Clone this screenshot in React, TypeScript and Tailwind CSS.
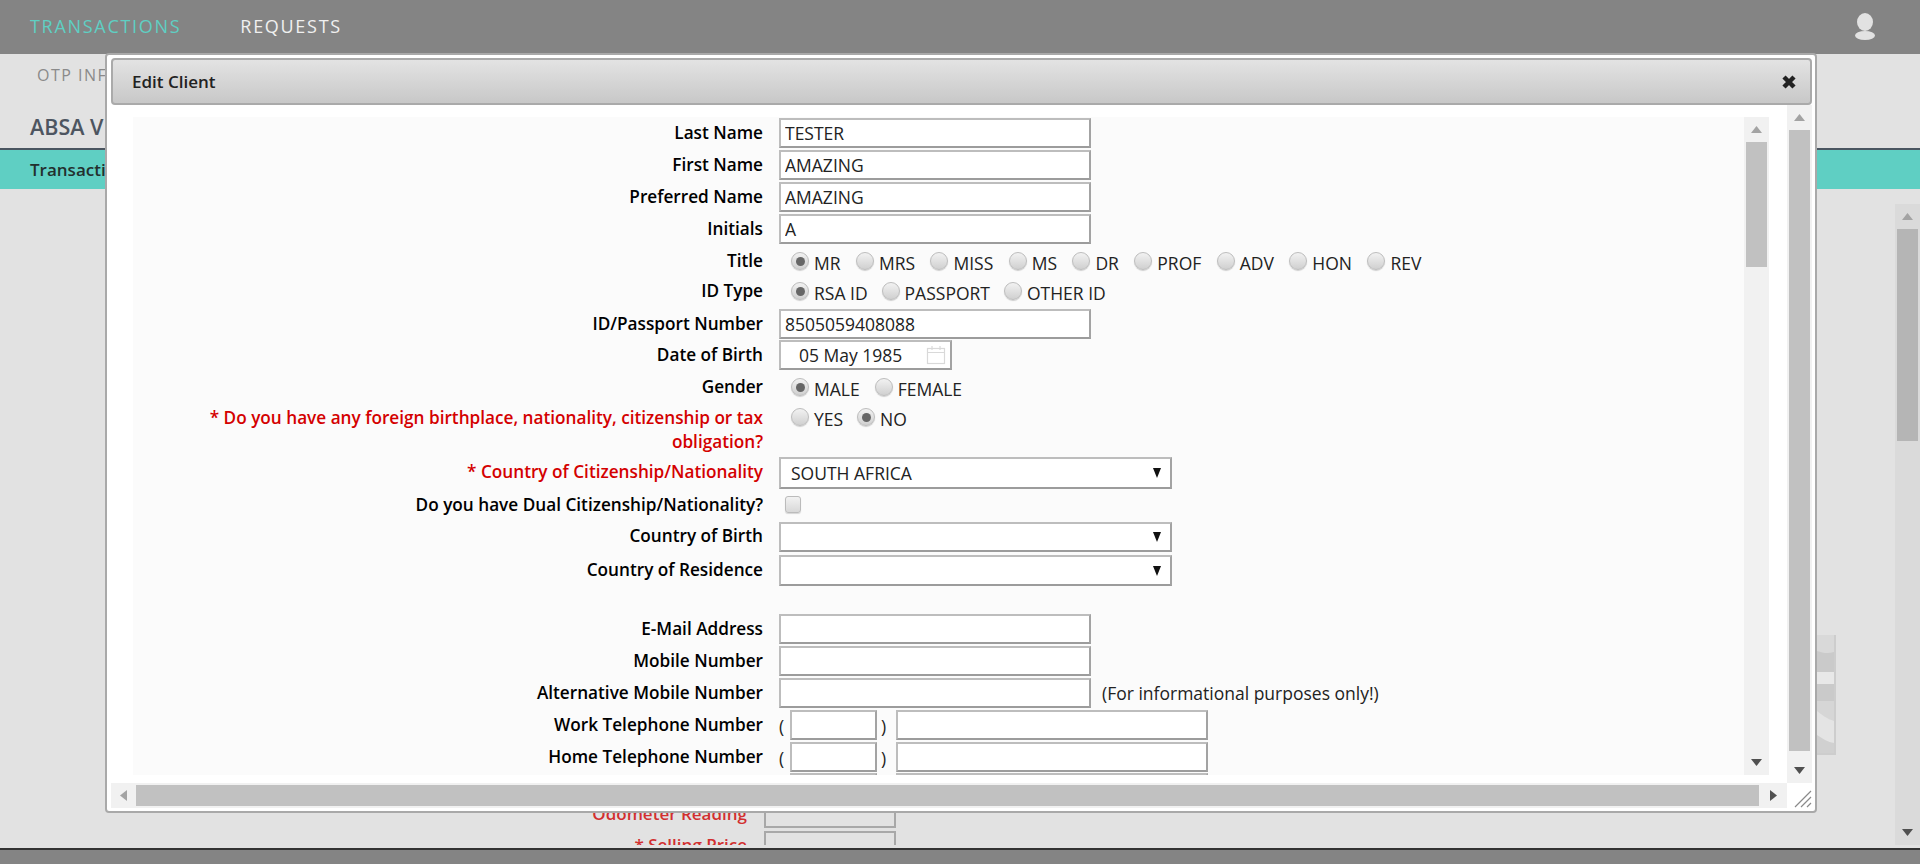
import type { ReactNode } from "react"

const inputClass =
  "h-full border-2 border-t-[#bdbdbd] border-l-[#bdbdbd] border-r-[#a3a3a3] border-b-[#9c9c9c] bg-white px-[4px] text-[17.5px] text-[#222] outline-none"

function Arrow({ dir, color }: { dir: "up" | "down" | "left" | "right"; color: string }) {
  if (dir === "up" || dir === "down") {
    return (
      <svg width="11" height="7" viewBox="0 0 11 7">
        <path d={dir === "up" ? "M5.5 0 11 7H0z" : "M0 0h11L5.5 7z"} fill={color} />
      </svg>
    )
  }
  return (
    <svg width="7" height="11" viewBox="0 0 7 11">
      <path d={dir === "left" ? "M7 0v11L0 5.5z" : "M0 0l7 5.5L0 11z"} fill={color} />
    </svg>
  )
}

function VScroll({ thumb, track = "bg-[#f1f1f1]", thumbColor = "bg-[#c1c1c1]" }: { thumb: string; track?: string; thumbColor?: string }) {
  return (
    <div className={`flex w-[25px] shrink-0 flex-col items-center ${track}`}>
      <div className="flex h-[25px] items-center justify-center">
        <Arrow dir="up" color="#a3a3a3" />
      </div>
      <div className={`w-[21px] ${thumbColor} ${thumb}`} />
      <div className="flex-1" />
      <div className="flex h-[25px] items-center justify-center">
        <Arrow dir="down" color="#505050" />
      </div>
    </div>
  )
}

function Radio({ label, checked = false }: { label: string; checked?: boolean }) {
  return (
    <span className="ml-[12px] mr-[2px] flex items-start">
      <span className="mt-[6px] flex h-[18px] w-[18px] items-center justify-center rounded-full border border-[#bdbdbd] bg-gradient-to-b from-[#f2f2f2] to-[#d0d0d0] shadow-[0_1px_1px_rgba(0,0,0,0.18)]">
        {checked && <span className="h-[9px] w-[9px] rounded-full bg-[#666]" />}
      </span>
      <span className="ml-[5px] mt-[6px] leading-[22px]">{label}</span>
    </span>
  )
}

function Row({
  label,
  red = false,
  tight = false,
  className,
  childClass = "",
  children,
}: {
  label?: ReactNode
  red?: boolean
  tight?: boolean
  className: string
  childClass?: string
  children?: ReactNode
}) {
  return (
    <div className={`flex ${className}`}>
      <div className={`w-[630px] shrink-0 text-right text-[17.2px] font-semibold leading-[24px] ${tight ? "pt-[2px]" : "pt-[3px]"} ${red ? "text-[#d40000]" : "text-black"}`}>
        {label}
      </div>
      <div className={`ml-[16px] flex h-full flex-1 text-[17.5px] text-[#222] ${childClass}`}>{children}</div>
    </div>
  )
}

function TextInput({ value = "" }: { value?: string }) {
  return <input readOnly value={value} className={`w-[312px] ${inputClass}`} />
}

function SelectBox({ value }: { value?: string }) {
  return (
    <div className="flex h-full w-[393px] items-center justify-between border-2 border-t-[#bdbdbd] border-l-[#bdbdbd] border-r-[#a3a3a3] border-b-[#9c9c9c] bg-white pl-[10px] pr-[9px] text-[17.5px] text-[#222]">
      <span>{value}</span>
      <svg width="8" height="10" viewBox="0 0 8 10">
        <path d="M0 0h8L4 10z" fill="#111" />
      </svg>
    </div>
  )
}

function PhoneInputs() {
  return (
    <>
      <span className="w-[11px] pt-[3px]">(</span>
      <input readOnly className={`w-[87px] ${inputClass}`} />
      <span className="w-[19px] pl-[4px] pt-[3px]">)</span>
      <input readOnly className={`w-[312px] ${inputClass}`} />
    </>
  )
}

function EditClientForm() {
  return (
    <div className="h-[658px] flex-1 overflow-hidden bg-[#fbfbfb] pt-[1px]">
      <Row label="Last Name" className="mb-[2px] h-[30px]"><TextInput value="TESTER" /></Row>
      <Row label="First Name" className="mb-[2px] h-[30px]"><TextInput value="AMAZING" /></Row>
      <Row label="Preferred Name" className="mb-[2px] h-[30px]"><TextInput value="AMAZING" /></Row>
      <Row label="Initials" className="mb-[2px] h-[30px]"><TextInput value="A" /></Row>
      <Row label="Title" className="h-[30px]" childClass="gap-[1.4px]">
        <Radio label="MR" checked />
        <Radio label="MRS" />
        <Radio label="MISS" />
        <Radio label="MS" />
        <Radio label="DR" />
        <Radio label="PROF" />
        <Radio label="ADV" />
        <Radio label="HON" />
        <Radio label="REV" />
      </Row>
      <Row label="ID Type" className="mb-[2px] h-[31px]">
        <Radio label="RSA ID" checked />
        <Radio label="PASSPORT" />
        <Radio label="OTHER ID" />
      </Row>
      <Row label="ID/Passport Number" className="mb-[1px] h-[30px]"><TextInput value="8505059408088" /></Row>
      <Row label="Date of Birth" className="mb-[2px] h-[30px]">
        <div className="flex h-full w-[173px] items-center border-2 border-t-[#bdbdbd] border-l-[#bdbdbd] border-r-[#a3a3a3] border-b-[#9c9c9c] bg-white pl-[18px]">
          <span className="w-[127px] shrink-0 whitespace-nowrap">05 May 1985</span>
          <svg width="20" height="20" viewBox="0 0 20 20" fill="none" stroke="#d9d9d9" strokeWidth="1.2">
            <rect x="1.5" y="3.5" width="17" height="15" />
            <path d="M1.5 7.5h17M6 1v4M14 1v4" />
          </svg>
        </div>
      </Row>
      <Row label="Gender" className="mb-[4px] h-[30px]" childClass="gap-[1px]">
        <Radio label="MALE" checked />
        <Radio label="FEMALE" />
      </Row>
      <div className="mb-[3px] flex h-[48px]">
        <div className="w-[630px] shrink-0 pl-[40px] text-right text-[17.2px] font-semibold leading-[24px] text-[#d40000]">
          * Do you have any foreign birthplace, nationality, citizenship or tax obligation?
        </div>
        <div className="-mt-[4px] ml-[16px] flex text-[17.5px] text-[#222]">
          <Radio label="YES" />
          <Radio label="NO" checked />
        </div>
      </div>
      <Row label="* Country of Citizenship/Nationality" red className="mb-[2px] h-[32px]"><SelectBox value="SOUTH AFRICA" /></Row>
      <Row label="Do you have Dual Citizenship/Nationality?" tight className="mb-[2px] h-[29px]">
        <span className="ml-[6px] mt-[5px] h-[17px] w-[16px] rounded-[3px] border border-[#bbb] bg-gradient-to-b from-[#f2f2f2] to-[#d8d8d8] shadow-[0_1px_1px_rgba(0,0,0,0.15)]" />
      </Row>
      <Row label="Country of Birth" tight className="mb-[3px] h-[30px]"><SelectBox /></Row>
      <Row label="Country of Residence" className="mb-[28px] h-[31px]"><SelectBox /></Row>
      <Row label="E-Mail Address" className="mb-[2px] h-[30px]"><TextInput /></Row>
      <Row label="Mobile Number" className="mb-[2px] h-[30px]"><TextInput /></Row>
      <Row label="Alternative Mobile Number" className="mb-[2px] h-[30px]">
        <TextInput />
        <span className="ml-[11px] pt-[2px]">(For informational purposes only!)</span>
      </Row>
      <Row label="Work Telephone Number" className="mb-[2px] h-[30px]"><PhoneInputs /></Row>
      <Row label="Home Telephone Number" className="mb-[1px] h-[30px]"><PhoneInputs /></Row>
      <Row className="h-[30px]">
        <span className="w-[11px]" />
        <input readOnly className={`w-[87px] ${inputClass}`} />
        <span className="w-[19px]" />
        <input readOnly className={`w-[312px] ${inputClass}`} />
      </Row>
    </div>
  )
}

function EditClientModal() {
  return (
    <div className="absolute left-[105px] top-[53px] flex h-[760px] w-[1712px] flex-col rounded-[4px] border-2 border-[#a9a9a9] bg-white pb-[3px] pl-[4px] pr-[3px] pt-[3px]">
      <div className="flex h-[47px] shrink-0 items-center justify-between rounded-[4px] border-2 border-[#aaaaaa] bg-gradient-to-b from-[#e3e3e3] to-[#c8c8c8] pl-[19px] pr-[13px] text-[17px] font-semibold text-[#222]">
        <span>Edit Client</span>
        <svg width="16" height="16" viewBox="0 0 16 16">
          <path d="M3 3l10 10M13 3L3 13" stroke="#222" strokeWidth="4.5" />
        </svg>
      </div>
      <div className="flex h-[678px] shrink-0">
        <div className="flex flex-1 pl-[22px] pt-[12px]">
          <EditClientForm />
          <div className="flex h-[658px]">
            <VScroll thumb="h-[125px]" />
          </div>
          <div className="w-[18px]" />
        </div>
        <VScroll thumb="h-[621px]" />
      </div>
      <div className="flex h-[25px] shrink-0">
        <div className="flex flex-1 items-center bg-[#f1f1f1]">
          <div className="flex w-[25px] items-center justify-center">
            <Arrow dir="left" color="#a3a3a3" />
          </div>
          <div className="h-[21px] flex-1 bg-[#c1c1c1]" />
          <div className="flex w-[28px] items-center justify-center">
            <Arrow dir="right" color="#505050" />
          </div>
        </div>
        <div className="flex w-[25px] items-end justify-end">
          <svg width="18" height="18" viewBox="0 0 18 18" stroke="#8a8a8a" strokeWidth="1.2">
            <path d="M1 17 17 1M7 17 17 7M13 17l4-4" />
          </svg>
        </div>
      </div>
    </div>
  )
}

export default function App() {
  return (
    <div className="relative flex h-screen flex-col overflow-hidden bg-[#e2e2e2] font-['Open_Sans',sans-serif]">
      <nav className="flex h-[54px] shrink-0 items-center bg-[#848484] pb-[2px] pl-[30px] pr-[45px] text-[18px] tracking-[1.7px]">
        <span className="text-[#5fcfc3]">TRANSACTIONS</span>
        <span className="ml-[59px] text-[#f0f0f0]">REQUESTS</span>
        <svg className="ml-auto" width="20" height="27" viewBox="0 0 20 27" fill="#e2e2e2">
          <ellipse cx="10" cy="9" rx="8" ry="9" />
          <ellipse cx="10" cy="22.5" rx="10" ry="4.5" />
        </svg>
      </nav>
      <div className="h-[46px] shrink-0 pl-[37px] pt-[9px] text-[16px] tracking-[1.5px] text-[#8a8a8a]">OTP INF</div>
      <div className="h-[48px] shrink-0 pl-[30px] pt-[11px] text-[21.5px] font-semibold text-[#4d5560]">ABSA V</div>
      <div className="flex h-[41px] shrink-0 items-center border-t-2 border-[#4a5560] bg-[#5fcfc3] pl-[30px] text-[17px] font-semibold text-[#23302e]">
        Transacti
      </div>
      <div className="flex min-h-0 flex-1 pb-[3px]">
        <div className="flex-1 overflow-hidden pt-[610px]">
          <div className="mb-[3px] flex h-[29px]">
            <span className="w-[747px] pt-[2px] text-right text-[17px] font-semibold text-[#d22f2f]">Odometer Reading</span>
            <span className="ml-[17px] w-[132px] border-2 border-[#a8a8a8]" />
          </div>
          <div className="flex h-[29px]">
            <span className="w-[747px] pt-[1px] text-right text-[17px] font-semibold text-[#d22f2f]">* Selling Price</span>
            <span className="ml-[17px] w-[132px] border-2 border-[#a8a8a8]" />
          </div>
        </div>
        <div className="mb-[90px] mr-[59px] h-[120px] w-[19px] self-end border-b-2 border-r-2 border-[#cdcdcd] bg-[#d8d8d8]">
          <svg width="17" height="118" viewBox="0 0 17 118">
            <path d="M0 0h17v17c-6 2-11 1-17-1z" fill="#d9d9d9" />
            <path d="M0 16c6 2 11 3 17 1v20H0z" fill="#cacaca" />
            <path d="M0 37h17v12H0z" fill="#e8e8e8" />
            <path d="M0 49h17v17H0z" fill="#cacaca" />
            <path d="M0 66h17v20C10 84 5 80 0 76z" fill="#d6d6d6" />
            <path d="M0 76c5 4 10 8 17 10v32H0z" fill="#e4e4e4" />
            <path d="M0 100c6 4 11 7 17 8v10H0z" fill="#d0d0d0" />
          </svg>
        </div>
        <div className="mt-[15px] flex">
          <VScroll thumb="h-[212px]" track="bg-[#dadada]" thumbColor="bg-[#b5b5b5]" />
        </div>
      </div>
      <div className="h-[16px] shrink-0 border-t-2 border-[#333] bg-[#848484]" />
      <EditClientModal />
    </div>
  )
}
